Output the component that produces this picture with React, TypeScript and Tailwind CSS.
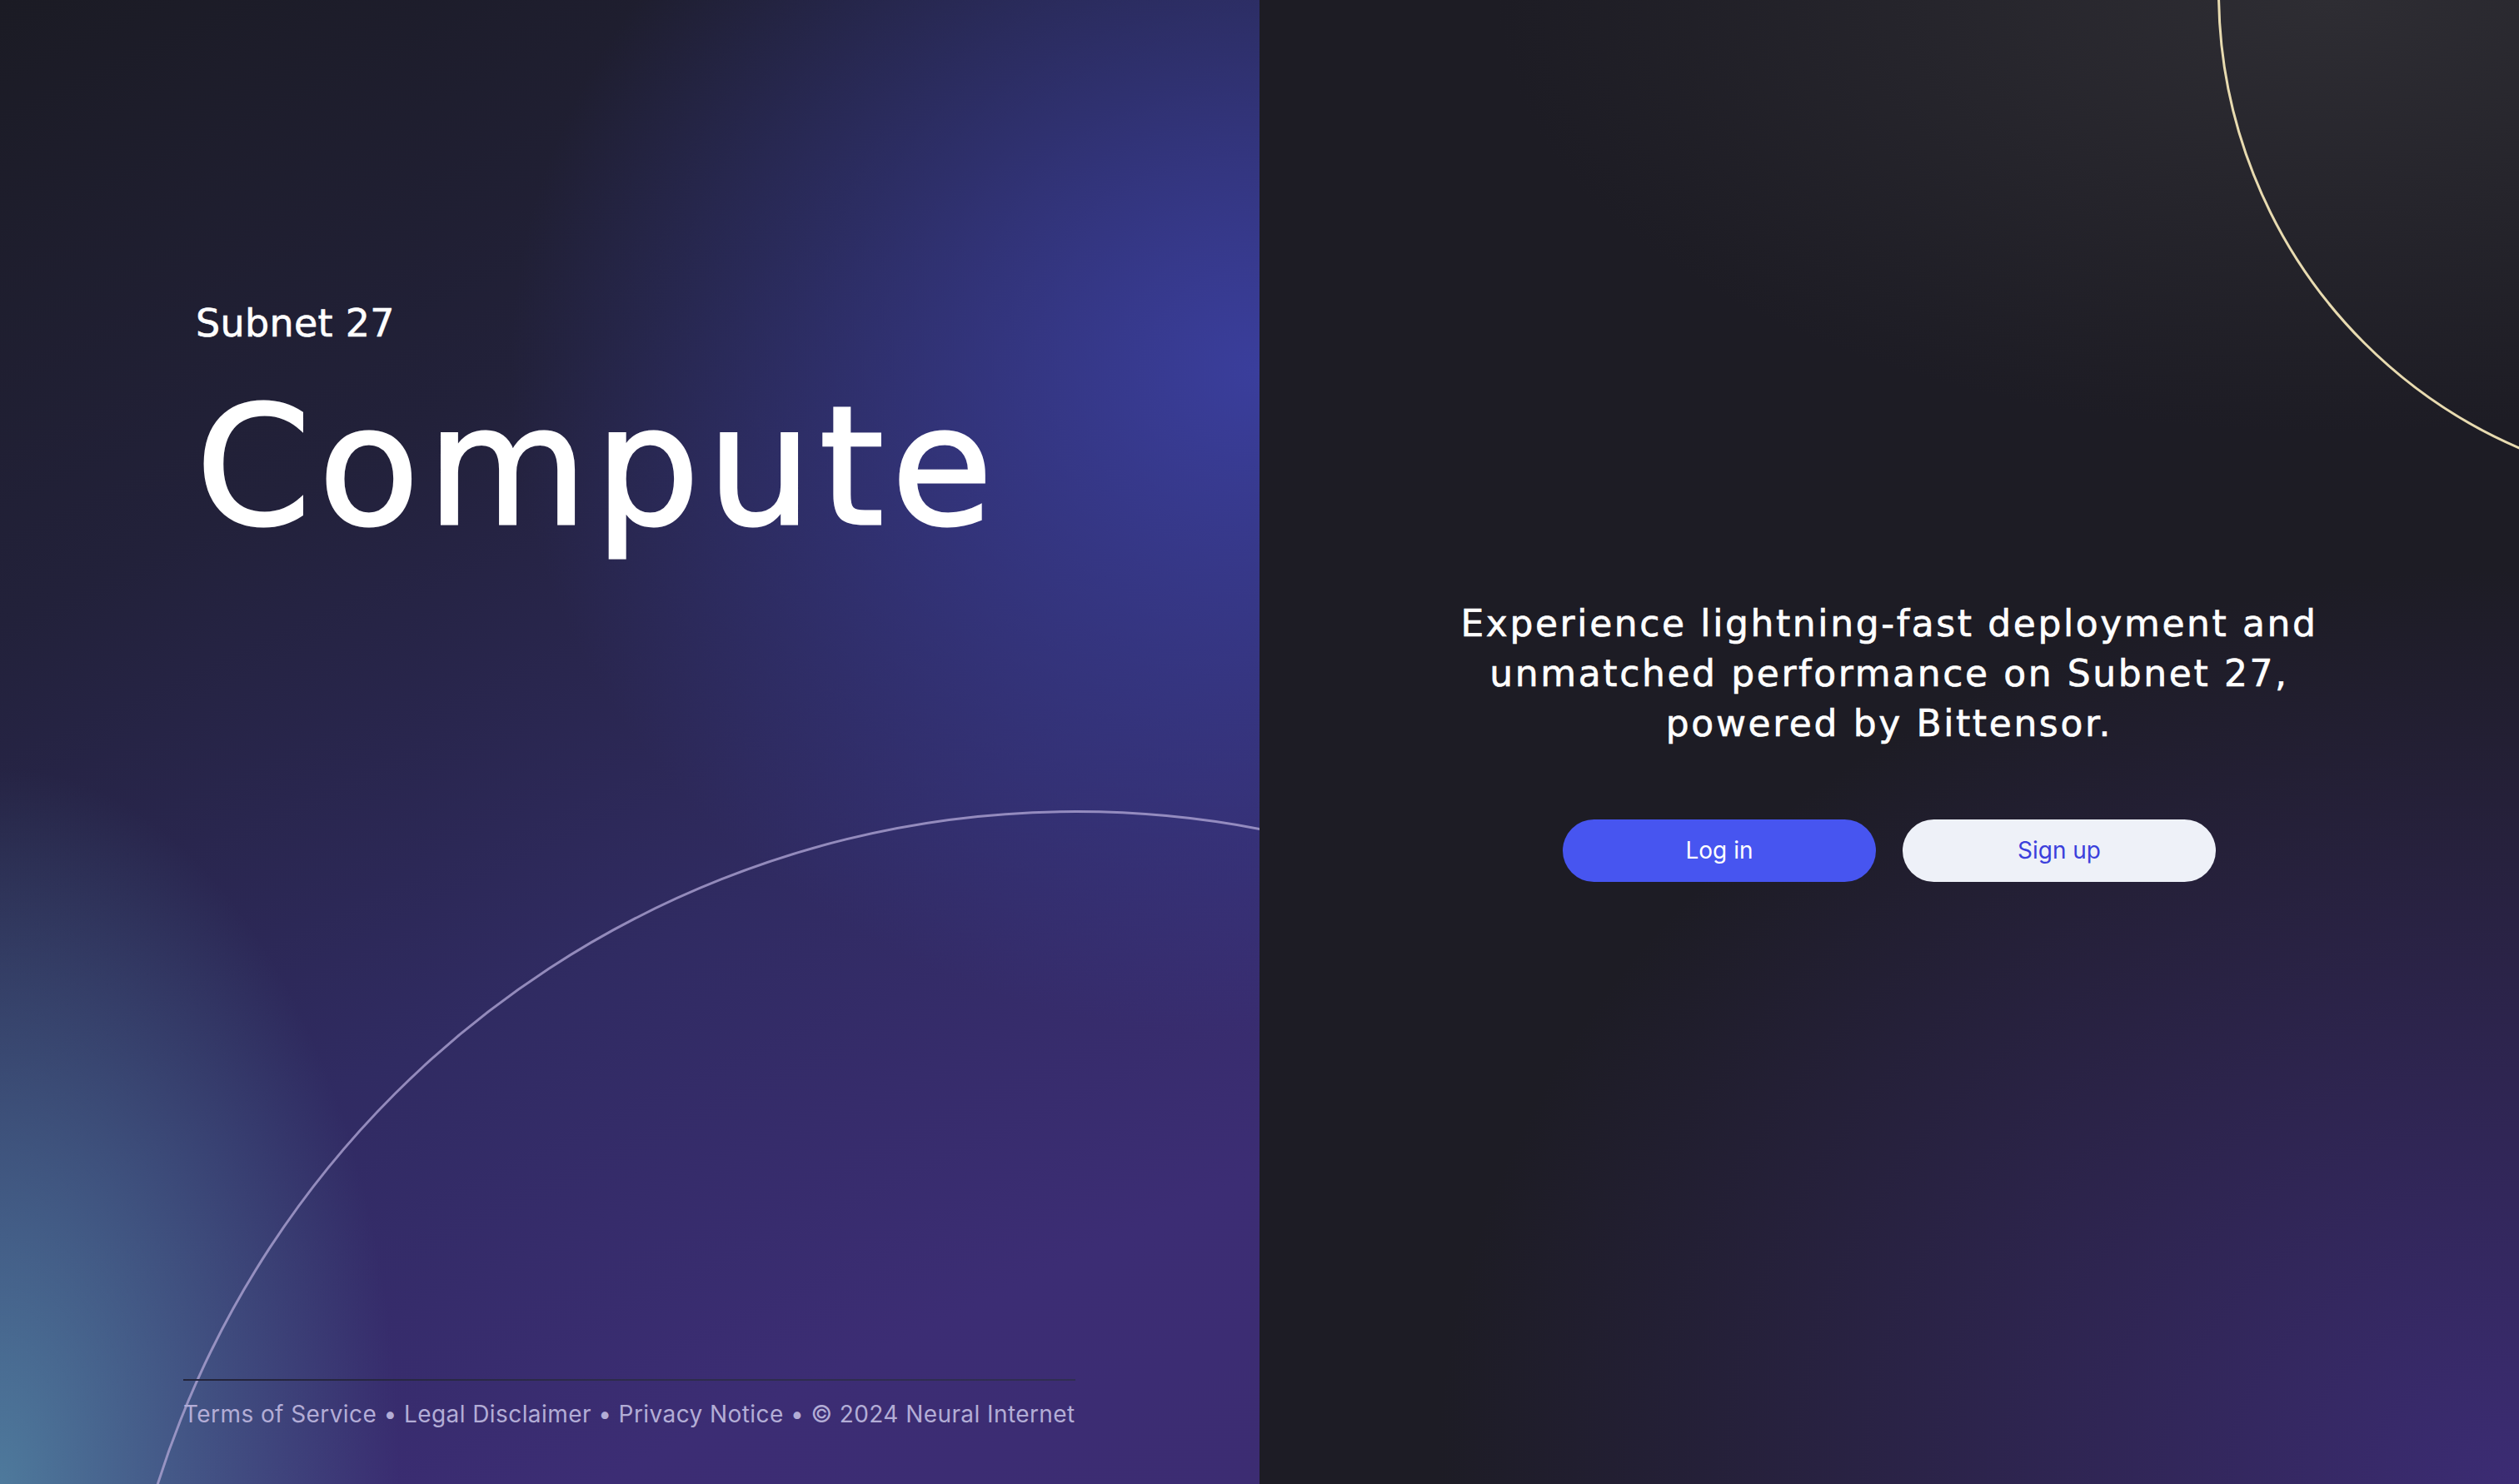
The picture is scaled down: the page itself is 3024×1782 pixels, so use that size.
import React from 'react';

const FOOTER_LINKS = ['Terms of Service', 'Legal Disclaimer', 'Privacy Notice', '© 2024 Neural Internet'];

const HeroPanel = () => {
  return (
    <div className="relative w-1/2 h-full overflow-hidden flex flex-col bg-[radial-gradient(ellipse_480px_860px_at_0%_100%,rgba(80,128,160,0.92)_0%,rgba(80,128,160,0)_100%),radial-gradient(ellipse_900px_800px_at_100%_25%,rgba(58,62,156,1)_0%,rgba(58,62,156,0)_100%),linear-gradient(155deg,#1b1b24_0%,#22213a_30%,#302b62_60%,#3c2d74_85%,#3c2c72_100%)]">
      {/* big arc */}
      <div className="absolute left-[134px] top-[973px] w-[2316px] h-[2316px] rounded-full border-[3px] border-[#aca3d2]/80" />

      <div className="relative pl-[235px] pt-[365px] text-white font-['DejaVu_Sans',sans-serif]">
        <p className="text-[46px] leading-none tracking-[0.3px] [-webkit-text-stroke:0.6px_white]">Subnet 27</p>
        <h1 className="mt-[51px] text-[198px] leading-none tracking-[9px] [-webkit-text-stroke:3px_white]">Compute</h1>
      </div>

      <div className="relative mt-auto pl-[220px] pb-[66px]">
        <div className="inline-flex flex-col">
          <div className="h-[2px] bg-gradient-to-r from-[#23243a] via-[#2d2c4a] to-[#302e52]" />
          <p className="mt-[22px] text-[28px] leading-[36px] tracking-[0.42px] text-[#b3add6] font-['Inter',sans-serif] whitespace-nowrap">
            {FOOTER_LINKS.join(' • ')}
          </p>
        </div>
      </div>
    </div>
  );
};

const AuthPanel = () => {
  return (
    <div className="relative w-1/2 h-full overflow-hidden flex flex-col items-center justify-center pb-[5px] bg-[radial-gradient(ellipse_1300px_1100px_at_100%_100%,rgba(60,44,116,1)_0%,rgba(60,44,116,0)_100%),radial-gradient(ellipse_1000px_520px_at_85%_0%,rgba(46,45,51,1)_0%,rgba(46,45,51,0)_100%),linear-gradient(180deg,#1d1c24_0%,#1d1c25_100%)]">
      {/* corner arc */}
      <div className="absolute left-[1150px] top-[-608px] w-[1196px] h-[1196px] rounded-full border-[3px] border-[#e8dbb0]" />

      <p className="relative text-center text-white text-[44px] leading-[60px] tracking-[2.6px] [-webkit-text-stroke:0.6px_white] font-['DejaVu_Sans',sans-serif]">
        Experience lightning-fast deployment and
        <br />
        unmatched performance on Subnet 27,
        <br />
        powered by Bittensor.
      </p>

      <div className="relative mt-[85px] flex gap-[32px] font-['Inter',sans-serif]">
        <button className="w-[376px] h-[75px] rounded-full bg-[#4755f0] text-white text-[28px]">
          Log in
        </button>
        <button className="w-[376px] h-[75px] rounded-full bg-[#eef1f8] text-[#3b3fdc] text-[28px]">
          Sign up
        </button>
      </div>
    </div>
  );
};

export default function App() {
  return (
    <div className="flex w-full h-screen min-h-[1782px]">
      <HeroPanel />
      <AuthPanel />
    </div>
  );
}
